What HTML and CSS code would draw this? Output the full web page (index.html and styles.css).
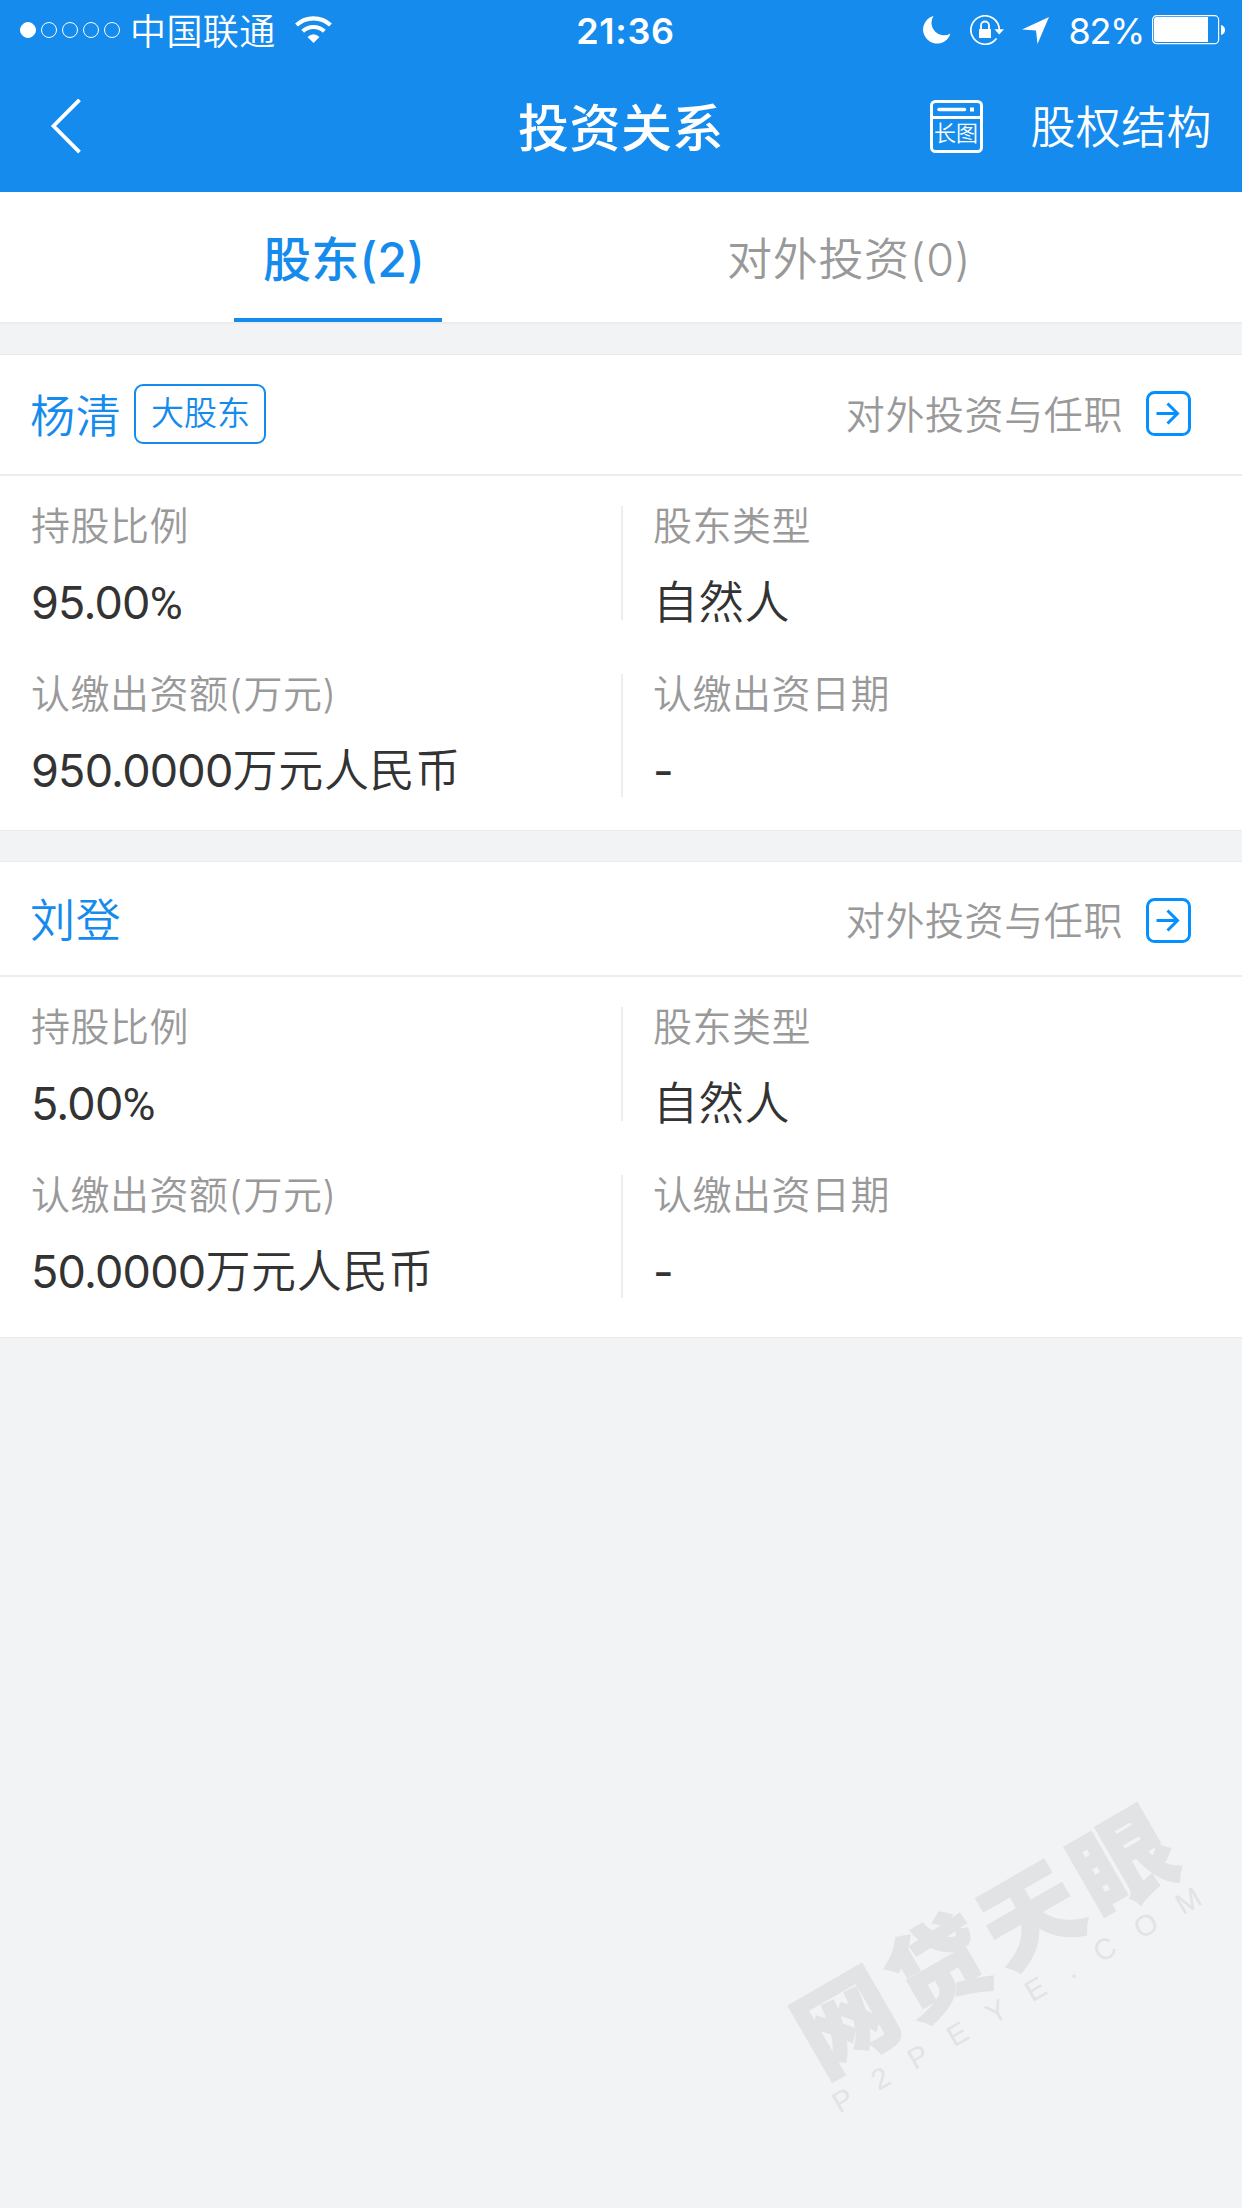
FILE: index.html
```
<!DOCTYPE html>
<html lang="zh-CN">
<head>
    <meta charset="UTF-8">
    <meta name="viewport" content="width=device-width, initial-scale=1.0">
    <title>投资关系</title>
    <link rel="stylesheet" href="styles.css">
</head>
<body>
    <header>
        <div class="status">
            <div class="status-left">
                <span class="dot full"></span>
                <span class="dot"></span>
                <span class="dot"></span>
                <span class="dot"></span>
                <span class="dot"></span>
                <span class="carrier">中国联通</span>
                <svg class="wifi" width="37" height="28" viewBox="0 0 37 28">
                    <path d="M1.5 9 A25 25 0 0 1 35.5 9" fill="none" stroke="#fff" stroke-width="4.2"/>
                    <path d="M7.7 15.2 A16 16 0 0 1 29.3 15.2" fill="none" stroke="#fff" stroke-width="4.2"/>
                    <path d="M12.5 21 Q18.5 15.5 24.5 21 L18.5 27 Z" fill="#fff"/>
                </svg>
            </div>
            <div class="time">21:36</div>
            <div class="status-right">
                <svg width="28" height="28" viewBox="0 0 28 28">
                    <path d="M10.5 0 A14 14 0 1 0 27.5 17.5 A12.5 12.5 0 0 1 10.5 0 Z" fill="#fff"/>
                </svg>
                <svg class="lock" width="34" height="30" viewBox="0 0 34 30">
                    <path d="M29.3 15 A14.2 14.2 0 1 0 26.5 23.5" fill="none" stroke="#fff" stroke-width="1.7"/>
                    <path d="M24.5 14.3 H34 L29.2 19.5 Z" fill="#fff"/>
                    <rect x="9" y="14" width="12" height="9" fill="#fff"/>
                    <path d="M11 14 V10.5 A4 4 0 0 1 19 10.5 V14" fill="none" stroke="#fff" stroke-width="1.8"/>
                </svg>
                <svg class="arrow" width="27" height="27" viewBox="0 0 27 27">
                    <path d="M27 0 L0 12.5 L14 13.5 L15.5 27 Z" fill="#fff"/>
                </svg>
                <span class="percent">82%</span>
                <svg width="73" height="30" viewBox="0 0 73 30">
                    <rect x="0.6" y="0.7" width="66" height="28" rx="4" fill="none" stroke="#fff" stroke-width="1.2"/>
                    <path d="M4.5 2 H56 V27 H4.5 Q2 27 2 24.5 V4.5 Q2 2 4.5 2 Z" fill="#fff"/>
                    <path d="M69 10 Q73 11 73 15 Q73 19 69 20 Z" fill="#fff"/>
                </svg>
            </div>
        </div>
        <nav class="navbar">
            <svg class="back" width="31" height="55" viewBox="0 0 31 55">
                <path d="M29.5 0.8 L3.5 27 L29.5 53.2" fill="none" stroke="#fff" stroke-width="3.8"/>
            </svg>
            <h1>投资关系</h1>
            <div class="nav-right">
                <svg width="53" height="53" viewBox="0 0 53 53">
                    <rect x="1.5" y="1.5" width="50" height="50" rx="4" fill="none" stroke="#fff" stroke-width="3"/>
                    <path d="M1.5 17.5 H51.5" stroke="#fff" stroke-width="3"/>
                    <path d="M9 9.5 H34.5" stroke="#fff" stroke-width="3.5" stroke-linecap="round"/>
                    <rect x="40" y="7.5" width="4" height="4" fill="#fff"/>
                    <text class="long-text" x="4" y="41">长图</text>
                </svg>
                <span>股权结构</span>
            </div>
        </nav>
    </header>

    <div class="tabs">
        <a class="tab active">股东(2)</a>
        <a class="tab">对外投资(0)</a>
    </div>

    <section class="card">
        <div class="card-head first">
            <span class="name">杨清</span>
            <span class="tag">大股东</span>
            <span class="link">对外投资与任职</span>
            <svg width="45" height="45" viewBox="0 0 45 45">
                <rect x="1.5" y="1.5" width="42" height="42" rx="7" fill="none" stroke="#0490ff" stroke-width="3"/>
                <path d="M10.5 22.5 H32 M21.5 12.5 L31.5 22.5 L21.5 32.5" fill="none" stroke="#0490ff" stroke-width="3"/>
            </svg>
        </div>
        <div class="info">
            <div class="cell">
                <p class="label">持股比例</p>
                <p class="value"><span class="num">95.00</span><span class="unit">%</span></p>
            </div>
            <div class="cell">
                <p class="label">股东类型</p>
                <p class="value">自然人</p>
            </div>
            <div class="cell">
                <p class="label">认缴出资额<span class="paren">(</span>万元<span class="paren">)</span></p>
                <p class="value"><span class="num">950.0000</span>万元人民币</p>
            </div>
            <div class="cell">
                <p class="label">认缴出资日期</p>
                <p class="value"><span class="num">-</span></p>
            </div>
        </div>
    </section>

    <section class="card">
        <div class="card-head">
            <span class="name">刘登</span>
            <span class="link">对外投资与任职</span>
            <svg width="45" height="45" viewBox="0 0 45 45">
                <rect x="1.5" y="1.5" width="42" height="42" rx="7" fill="none" stroke="#0490ff" stroke-width="3"/>
                <path d="M10.5 22.5 H32 M21.5 12.5 L31.5 22.5 L21.5 32.5" fill="none" stroke="#0490ff" stroke-width="3"/>
            </svg>
        </div>
        <div class="info">
            <div class="cell">
                <p class="label">持股比例</p>
                <p class="value"><span class="num">5.00</span><span class="unit">%</span></p>
            </div>
            <div class="cell">
                <p class="label">股东类型</p>
                <p class="value">自然人</p>
            </div>
            <div class="cell">
                <p class="label">认缴出资额<span class="paren">(</span>万元<span class="paren">)</span></p>
                <p class="value"><span class="num">50.0000</span>万元人民币</p>
            </div>
            <div class="cell">
                <p class="label">认缴出资日期</p>
                <p class="value"><span class="num">-</span></p>
            </div>
        </div>
    </section>

    <div class="watermark">
        <div class="wm-name">网贷天眼</div>
        <div class="wm-site">P2PEYE.COM</div>
    </div>
</body>
</html>
```

FILE: styles.css
```
*{
    box-sizing: border-box;
    margin: 0;
    padding: 0;
}
html{
    height: 100%;
}
body{
    position: relative;
    height: 2208px;
    overflow: hidden;
    background-color: #f1f3f5;
    font-family: Inter, "Noto Sans CJK SC", sans-serif;
    font-weight: 350;
    color: #333333;
}
svg{
    display: block;
    flex: none;
}

header{
    height: 192px;
    background-color: #158bed;
    color: white;
}
.status{
    display: grid;
    grid-template-columns: 1fr auto 1fr;
    align-items: center;
    height: 60px;
    padding: 0 17px 0 20px;
    font-size: 36px;
    line-height: 60px;
}
.status-left,.status-right{
    display: flex;
    align-items: center;
    height: 60px;
}
.status-right{
    justify-content: flex-end;
}
.dot{
    width: 16px;
    height: 16px;
    margin-right: 5px;
    border: 1px solid white;
    border-radius: 50%;
}
.full{
    background-color: white;
}
.carrier{
    margin-left: 5px;
    padding-top: 3px;
    letter-spacing: 0.4px;
}
.wifi{
    margin-left: 19px;
}
.time{
    height: 60px;
    padding-left: 6px;
    padding-top: 1px;
    font-weight: 600;
    letter-spacing: 0.7px;
}
.lock{
    margin-left: 19px;
}
.arrow{
    margin-left: 18px;
}
.percent{
    margin: 0 8px 0 20px;
    padding-top: 2px;
    font-weight: 400;
    letter-spacing: -1.4px;
}

.navbar{
    display: grid;
    grid-template-columns: 1fr auto 1fr;
    align-items: center;
    height: 132px;
    padding: 0 30px 0 50px;
}
.navbar h1{
    margin-left: -20px;
    padding-bottom: 3px;
    font-size: 51px;
    font-weight: 500;
    letter-spacing: 0.5px;
}
.nav-right{
    display: flex;
    align-items: center;
    justify-content: flex-end;
    gap: 47px;
    font-size: 45px;
    letter-spacing: 0.4px;
}
.nav-right span{
    padding-bottom: 4px;
}
.long-text{
    fill: white;
    font-size: 22px;
    letter-spacing: 0;
}

.tabs{
    display: flex;
    height: 132px;
    padding-left: 234px;
    background-color: white;
    border-bottom: 2px solid #ebedee;
}
.tab{
    margin-left: 285px;
    font-size: 45px;
    line-height: 135px;
    letter-spacing: 0.7px;
    color: #999999;
}
.active{
    width: 208px;
    height: 130px;
    margin-left: 0;
    padding-left: 29px;
    border-bottom: 4px solid #158bed;
    font-size: 48px;
    font-weight: 500;
    letter-spacing: 0.2px;
    color: #158bed;
}

.card{
    height: 477px;
    margin-top: 30px;
    background-color: white;
    border-top: 1px solid #e9ebec;
    border-bottom: 1px solid #e9ebec;
}
.card-head{
    display: flex;
    align-items: center;
    height: 115px;
    padding: 3px 51px 0 30px;
    border-bottom: 2px solid #ebedee;
}
.first{
    height: 121px;
    padding-top: 0;
    padding-bottom: 2px;
}
.name{
    padding-bottom: 5px;
    font-size: 45px;
    letter-spacing: 0.7px;
    color: #158bed;
}
.first .name{
    padding-bottom: 0;
}
.tag{
    width: 132px;
    height: 60px;
    margin-left: 13px;
    border: 2px solid #158bed;
    border-radius: 9px;
    font-size: 33px;
    line-height: 55px;
    text-align: center;
    color: #158bed;
}
.link{
    margin-left: auto;
    margin-right: 23px;
    padding-bottom: 4px;
    font-size: 39px;
    letter-spacing: 0.6px;
    color: #999999;
}

.info{
    display: grid;
    grid-template-columns: 621px 1fr;
    grid-template-rows: 114px 123px;
    row-gap: 54px;
    padding-top: 30px;
}
.cell{
    padding-left: 31px;
}
.cell:nth-child(even){
    padding-left: 30px;
    border-left: 2px solid #ebedee;
}
.label{
    height: 40px;
    font-size: 39px;
    line-height: 39px;
    letter-spacing: 0.5px;
    color: #999999;
}
.paren{
    letter-spacing: 1.5px;
}
.value{
    margin-top: 32px;
    font-size: 45px;
    line-height: 50px;
    letter-spacing: 0.7px;
    white-space: nowrap;
}
.num{
    font-weight: 400;
    letter-spacing: -0.8px;
}
.unit{
    font-family: Roboto, sans-serif;
    font-weight: 400;
}

.watermark{
    position: absolute;
    left: 783px;
    top: 2010px;
    transform: rotate(-30deg);
    transform-origin: 0 0;
    color: #e1e3e5;
    white-space: nowrap;
}
.wm-name{
    height: 95px;
    font-size: 98px;
    font-weight: 900;
    line-height: 86px;
    letter-spacing: 8.5px;
    -webkit-text-stroke: 2px #e1e3e5;
}
.wm-site{
    margin-left: -3px;
    font-family: "Liberation Sans", sans-serif;
    font-size: 29px;
    font-weight: 400;
    line-height: 26px;
    letter-spacing: 25.8px;
}
```
